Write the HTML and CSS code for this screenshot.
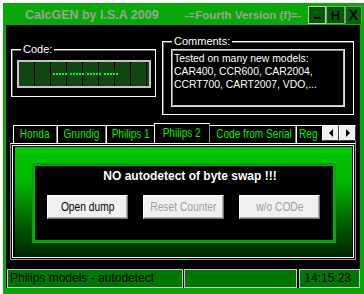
FILE: index.html
```html
<!DOCTYPE html>
<html>
<head>
<meta charset="utf-8">
<link rel="stylesheet" href="styles.css">
</head>
<body>
<div class="window">
  <div class="titlebar">
    <span class="title">CalcGEN by I.S.A 2009</span>
    <span class="version">-=Fourth Version (f)=-</span>
    <div class="tbtns">
      <span class="tb tb-min"><span class="bar"></span></span>
      <span class="tb tb-h">H</span>
      <span class="tb tb-x">X</span>
    </div>
  </div>
  <div class="client">
    <div class="groups">
      <div class="group code">
        <span class="glabel">Code:</span>
        <div class="lcd">
          <span class="dash"></span><span class="dash"></span><span class="dash"></span><span class="dash"></span>
        </div>
      </div>
      <div class="group comments">
        <span class="glabel">Comments:</span>
        <div class="memo">
          <div class="memo-text">Tested on many new models:<br>CAR400, CCR600, CAR2004,<br>CCRT700, CART2007, VDO,...</div>
        </div>
      </div>
    </div>
    <div class="tabs">
      <span class="tab t-honda"><span class="tx">Honda</span></span>
      <span class="tab t-grundig"><span class="tx">Grundig</span></span>
      <span class="tab t-ph1"><span class="tx">Philips 1</span></span>
      <span class="tab t-ph2 active"><span class="tx">Philips 2</span></span>
      <span class="tab t-serial"><span class="tx">Code from Serial</span></span>
      <span class="tab t-reg"><span class="tx">Reg</span></span>
      <div class="arrows">
        <span class="arr"><span class="tri-l"></span></span>
        <span class="arr"><span class="tri-r"></span></span>
      </div>
    </div>
    <div class="panel">
      <div class="panel-inner">
        <div class="grad">
          <div class="box">
            <div class="msg">NO autodetect of byte swap !!!</div>
            <div class="btns">
              <span class="btn"><span class="tx">Open dump</span></span>
              <span class="btn disabled"><span class="tx">Reset Counter</span></span>
              <span class="btn disabled"><span class="tx">w/o CODe</span></span>
            </div>
          </div>
        </div>
      </div>
    </div>
    <div class="status">
      <span class="sp sp1">Philips models - autodetect</span>
      <span class="sp sp2"></span>
      <span class="sp sp3">14:15:23</span>
    </div>
  </div>
</div>
</body>
</html>
```

FILE: styles.css
```css
* { box-sizing: border-box; }
html, body { margin: 0; padding: 0; background: #fff; }
body { font-family: "Liberation Sans", Arial, sans-serif; font-size: 12px; }

.window {
  margin: 3px 0 0 3px;
  width: 361px;
  height: 291px;
  background: #08a808;
  display: flex;
  flex-direction: column;
  padding: 0 4px 6px 3px;
}

.titlebar {
  height: 22px;
  flex: none;
  display: flex;
  align-items: flex-start;
  padding-left: 19px;
  margin-right: -2px;
}
.title, .version {
  font-weight: bold;
  font-size: 12.5px;
  color: #9aa49a;
  line-height: 14px;
  margin-top: 5px;
  white-space: nowrap;
  flex: none;
}
.version { margin-left: 26px; font-size: 11.5px; }
.tbtns { margin-left: auto; display: flex; margin-top: 3px; flex: none; }
.tb {
  width: 18px; height: 18px;
  display: flex; align-items: center; justify-content: center;
  font-weight: bold; font-size: 13px; color: #000;
  border: 1px solid #a8b0a8;
}
.tb-min { background: #005c00; border-color: #c8c8c8; align-items: flex-end; padding-bottom: 4px; }
.bar { width: 7px; height: 2px; background: #000; }
.tb-h { background: #006000; border-color: #909890; width: 19px; }
.tb-x { background: #006c00; border-color: #8a908a; border-bottom-color: #006c00; width: 17px; font-size: 14px; }

.client {
  flex: 1;
  background: #000;
  display: flex;
  flex-direction: column;
  padding: 0 4px 0 5px;
}

.groups { display: flex; align-items: flex-start; height: 90px; flex: none; }
.group {
  position: relative;
  border: 1px solid #fff;
  box-shadow: inset 1px 1px 0 #6a6a6a;
}
.glabel {
  position: absolute;
  top: -8px;
  background: #000;
  color: #fff;
  font-size: 11px;
  line-height: 14px;
  padding: 0 2px;
}
.code { margin-top: 24px; width: 145px; height: 48px; padding: 10px 0 0 5px; }
.code .glabel { left: 9px; }
.lcd {
  width: 134px; height: 28px;
  border: 2px solid #c4c4c4;
  background-color: #001400;
  background-image:
    repeating-linear-gradient(90deg, transparent 0 15px, #000 15px 16px),
    radial-gradient(circle, #248024 0.6px, transparent 0.8px);
  background-size: auto, 2px 2px;
  display: flex; align-items: center; justify-content: center; gap: 3px;
  padding-left: 2px;
}
.dash {
  width: 14px; height: 2px;
  background: repeating-linear-gradient(90deg, #00ff00 0 2px, transparent 2px 3px);
}
.comments { margin-top: 16px; margin-left: 6px; width: 192px; height: 74px; padding: 7px 0 0 8px; }
.comments .glabel { left: 9px; }
.memo {
  width: 174px; height: 58px;
  border: 1px solid #e4e4e4;
  box-shadow: inset 1px 1px 0 #8a8a8a, inset -1px -1px 0 #c0c0c0;
  padding: 2px 0 0 2px;
  overflow: hidden;
}
.memo-text {
  color: #fff;
  font-size: 11.3px;
  line-height: 13px;
  white-space: nowrap;
  transform: scaleX(0.92);
  transform-origin: 0 0;
}

.tabs {
  position: relative;
  margin-top: 8px;
  height: 20px;
  flex: none;
  display: flex;
  align-items: flex-end;
  padding-left: 3px;
  width: 346px;
  margin-left: -1px;
  overflow: hidden;
  z-index: 2;
}
.tab {
  height: 18px;
  flex: none;
  color: #00f000;
  font-size: 12px;
  line-height: 17px;
  text-align: center;
  background: #000;
  border-top: 1px solid #fff;
  border-left: 1px solid #fff;
  border-right: 1px solid #8a8a8a;
  white-space: nowrap;
}
.tx { display: inline-block; transform: scaleX(0.84); }
.t-honda { width: 44px; }
.t-grundig { width: 49px; }
.t-ph1 { width: 50px; }
.t-ph2 { width: 56px; margin: 0 -2px -1px -2px; height: 21px; position: relative; z-index: 3; line-height: 18px; padding-bottom: 2px; }
.t-serial { width: 88px; }
.t-reg { width: 60px; text-align: left; padding-left: 2px; }
.t-reg .tx { transform-origin: 0 0; }
.arrows { position: absolute; right: 0; top: 2px; display: flex; z-index: 4; }
.arr {
  width: 17px; height: 16px;
  background: #f0f0f0;
  border: 1px solid; border-color: #fff #404040 #404040 #fff;
  display: flex; align-items: center; justify-content: center;
}
.tri-l { width: 0; height: 0; border-top: 4px solid transparent; border-bottom: 4px solid transparent; border-right: 4px solid #000; }
.tri-r { width: 0; height: 0; border-top: 4px solid transparent; border-bottom: 4px solid transparent; border-left: 4px solid #000; }

.panel {
  margin-left: -1px;
  width: 346px;
  height: 117px;
  flex: none;
  border: 1px solid #969696;
  border-top-color: #fff;
  padding: 1px;
  position: relative;
  z-index: 1;
}
.panel-inner {
  height: 100%;
  border: 1px solid #fff;
  padding: 1px 1px 0 2px;
}
.grad {
  height: 100%;
  background: linear-gradient(#00c800 0%, #00b800 30%, #006000 70%, #002400 100%);
  padding: 16px 0 0 17px;
}
.box {
  width: 304px; height: 80px;
  background: #000;
  border: 3px solid #00a800;
  padding-top: 3px;
}
.msg {
  color: #fff;
  font-weight: bold;
  font-size: 12px;
  line-height: 15px;
  text-align: center;
  padding-left: 12px;
}
.btns { display: flex; gap: 15px; margin-top: 11px; padding-left: 12px; }
.btn {
  width: 81px; height: 24px;
  background: #f0f0f0;
  border: 1px solid;
  border-color: #ffffff #707070 #707070 #ffffff;
  box-shadow: inset -1px -1px 0 #b0b0b0;
  display: flex; align-items: center; justify-content: center;
  font-size: 12.5px;
  color: #000;
  white-space: nowrap;
}
.btn .tx { transform: scaleX(0.82); }
.btn.disabled { color: #a0a0a0; }

.status {
  margin-top: 9px;
  height: 19px;
  flex: none;
  display: flex;
  margin-left: -4px;
  margin-right: -4px;
}
.sp {
  height: 19px;
  background: #007800;
  border: 1px solid #c8c8c8;
  font-size: 12px;
  line-height: 17px;
  color: #000;
  white-space: nowrap;
}
.sp1 { width: 176px; padding-left: 2px; }
.sp2 { width: 113px; margin-left: 1px; }
.sp3 { width: 61px; margin-left: 2px; text-align: right; padding-right: 8px; }
```
